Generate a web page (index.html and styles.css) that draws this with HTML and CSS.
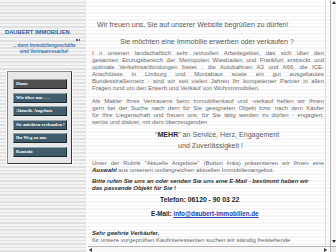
FILE: index.html
```html
<!DOCTYPE html>
<html lang="de">
<head>
<meta charset="utf-8">
<title>Daubert Immobilien</title>
<link rel="stylesheet" href="styles.css">
</head>
<body>
<div class="page">
  <aside class="side">
    <div class="brand">DAUBERT IMMOBILIEN</div>
    <div class="dots"><span></span><span></span></div>
    <div class="tagline">... denn Immobiliengeschäfte<br>sind Vertrauenssache!</div>
    <nav class="menu">
      <a class="btn home">Home</a>
      <a class="btn">Wir über uns . . .</a>
      <a class="btn">Aktuelle Angebote</a>
      <a class="btn">Sie möchten verkaufen !</a>
      <a class="btn">Ihr Weg zu uns</a>
      <a class="btn">Kontakt</a>
    </nav>
  </aside>
  <div class="frame">
    <div class="view">
      <main class="content">
        <h1 class="welcome">Wir freuen uns, Sie auf unserer Website begrüßen zu dürfen!</h1>
        <h2 class="question">Sie möchten eine Immobilie erwerben oder verkaufen ?</h2>
        <p class="para p1">
          <span class="ln">I n unseren landschaftlich sehr reizvollen Arbeitsgebiet, das sich über den</span>
          <span class="ln">gesamten Einzugsbereich der Metropolen Wiesbaden und Frankfurt erstreckt und</span>
          <span class="ln">optimale Verkehrsanbindungen bietet - die Autobahnen A3 und A66, die ICE-</span>
          <span class="ln">Anschlüsse in Limburg und Montabaur sowie ein gut ausgebautes</span>
          <span class="ln">Bundesstraßennetz - sind wir seit vielen Jahren Ihr kompetenter Partner in allen</span>
          <span class="ln last">Fragen rund um den Erwerb und Verkauf von Wohnimmobilien.</span>
        </p>
        <p class="para p2">
          <span class="ln">Als Makler Ihres Vertrauens beim Immobilienkauf und -verkauf helfen wir Ihnen</span>
          <span class="ln">gern bei der Suche nach dem für Sie geeigneten Objekt bzw. nach dem Käufer</span>
          <span class="ln">für Ihre Liegenschaft und freuen uns, für Sie tätig werden zu dürfen - engagiert,</span>
          <span class="ln last">seriös und diskret, mit dem überzeugenden</span>
        </p>
        <p class="mehr">“<b>MEHR</b>” an Service, Herz, Engagement</p>
        <p class="mehr2">und Zuverlässigkeit !</p>
        <p class="para p3">
          <span class="ln">Unter der Rubrik "Aktuelle Angebote" (Button links) präsentieren wir Ihnen eine</span>
          <span class="ln last"><b><i>Auswahl</i></b> aus unserem umfangreichen aktuellen Immobilienangebot.</span>
        </p>
        <p class="para p4">Bitte rufen Sie uns an oder senden Sie uns eine E-Mail - bestimmt haben wir<br>das passende Objekt für Sie !</p>
        <p class="tel">Telefon: 06120 - 90 03 22</p>
        <p class="mail">E-Mail: <a class="maillink">info@daubert-immobilien.de</a></p>
        <p class="para p5"><b><i>Sehr geehrte Verkäufer,</i></b><br>für unsere vorgeprüften Kaufinteressenten suchen wir ständig freistehende</p>
      </main>
      <div class="gutter"></div>
      <div class="vscroll">
        <svg class="arrow" viewBox="0 0 4 3" width="4" height="3"><polygon points="2,0 4,3 0,3"/></svg>
        <svg class="arrow" viewBox="0 0 4 3" width="4" height="3"><polygon points="0,0 4,0 2,3"/></svg>
      </div>
    </div>
    <div class="hbar">
      <div class="hscroll">
        <svg class="arrow" viewBox="0 0 3 4" width="3" height="4"><polygon points="3,0 3,4 0,2"/></svg>
        <svg class="arrow" viewBox="0 0 3 4" width="3" height="4"><polygon points="0,0 3,2 0,4"/></svg>
      </div>
      <div class="corner"></div>
    </div>
  </div>
</div>
</body>
</html>
```

FILE: styles.css
```css
* { box-sizing: border-box; margin: 0; padding: 0; }
html, body { width: 336px; height: 252px; overflow: hidden; }
body { font-family: "Liberation Sans", Arial, sans-serif; background: #eeeeee; }

.page { display: flex; height: 252px; }

/* left navigation column */
.side {
  width: 88px;
  flex: none;
  border-right: 2px solid #fbfbfb;
  background: repeating-linear-gradient(to bottom, #f4f4f4 0, #f4f4f4 2px, #e0e0e0 2px, #e0e0e0 3.5px);
  padding-top: 28.5px;
}
.brand {
  margin-left: 5px;
  font-weight: bold;
  font-size: 5.8px;
  line-height: 7px;
  color: #2f5e9e;
  white-space: nowrap;
}
.dots { display: flex; gap: 1px; height: 2px; margin: 3.5px 0 0 76px; }
.dots span { width: 1.5px; height: 1.5px; background: #4c5f82; }
.tagline {
  width: 82px;
  margin: 2px 0 0 3px;
  text-align: center;
  font-weight: bold;
  font-size: 4.6px;
  line-height: 6px;
  color: #3e70b2;
  white-space: nowrap;
}
.menu {
  display: flex;
  flex-direction: column;
  gap: 3.6px;
  width: 65px;
  margin: 16px 0 0 7px;
  padding: 7px 4px 6px 5px;
  border: 1px solid;
  border-color: #8a8a8a #3a3a3a #3a3a3a #8a8a8a;
  background: #e8e8e8;
  box-shadow: 0 0 0 1px #fdfdfd;
}
.btn {
  display: block;
  height: 10px;
  padding-left: 2px;
  border: 1px solid;
  border-color: #8fa4ae #1c2930 #1c2930 #8fa4ae;
  background: #415c6a;
  color: #ffffff;
  font-family: "Liberation Serif", "Times New Roman", serif;
  font-weight: bold;
  font-size: 4.7px;
  line-height: 8px;
  white-space: nowrap;
  text-decoration: none;
}
.btn.home { background: #505050; border-color: #a2a2a2 #202020 #202020 #a2a2a2; }

/* main frame */
.frame { flex: 1; display: flex; flex-direction: column; min-width: 0; }
.view {
  flex: 1;
  display: flex;
  min-height: 0;
  background: repeating-linear-gradient(to bottom, #ffffff 0, #ffffff 2px, #f5f5f5 2px, #f5f5f5 3.5px);
}
.content {
  width: 238px;
  flex: none;
  padding: 20px 1px 0 4px;
  border-right: 1px solid #bde9f1;
  overflow: hidden;
  color: #6a6a6a;
  font-size: 6px;
}
.gutter { flex: 1; }
.vscroll {
  width: 6px;
  flex: none;
  display: flex;
  flex-direction: column;
  justify-content: space-between;
  align-items: center;
  padding: 1px 0 3px;
  border-left: 1px solid #b4b4b4;
  background: #f7f7f7;
}
.arrow { display: block; fill: #333333; }
.hbar { height: 6px; flex: none; display: flex; }
.hscroll {
  flex: 1;
  display: flex;
  justify-content: space-between;
  align-items: center;
  padding: 0 3px 0 1px;
  border-top: 1px solid #b4b4b4;
  background: #f7f7f7;
}
.corner { width: 6px; flex: none; background: #ececec; border-top: 1px solid #b4b4b4; border-left: 1px solid #b4b4b4; }

.welcome {
  margin-left: 5px;
  font-weight: normal;
  font-size: 7.1px;
  line-height: 10px;
  color: #5c5c5c;
  white-space: nowrap;
}
.question {
  margin: 7px 0 0 28px;
  font-weight: normal;
  font-size: 7.1px;
  line-height: 10px;
  color: #5c5c5c;
  white-space: nowrap;
}
.para { line-height: 7px; width: 232px; }
.ln { display: block; text-align: justify; text-align-last: justify; }
.ln.last { text-align-last: left; }
.p1 { margin-top: 3px; }
.p2 { margin-top: 6px; }
.mehr {
  margin: 4px 0 0 63px;
  font-size: 7.1px;
  line-height: 10px;
  color: #5c5c5c;
  white-space: nowrap;
}
.mehr b { color: #2a2a2a; }
.mehr2 {
  margin: 1px 0 0 86px;
  font-size: 7.1px;
  line-height: 10px;
  color: #5c5c5c;
}
.p3 { margin-top: 8.5px; }
.p3 b { color: #2a2a2a; }
.p4 { margin-top: 4px; font-weight: bold; font-style: italic; color: #333333; white-space: nowrap; }
.tel {
  margin: 4.5px 0 0 68px;
  font-weight: bold;
  font-size: 6.8px;
  line-height: 8px;
  color: #262626;
  white-space: nowrap;
}
.mail {
  margin: 6px 0 0 59px;
  font-weight: bold;
  font-size: 6.3px;
  line-height: 8px;
  color: #262626;
  white-space: nowrap;
}
.maillink { color: #2343b0; text-decoration: underline; }
.p5 { margin-top: 11.5px; white-space: nowrap; }
.p5 b { color: #333333; }
```
